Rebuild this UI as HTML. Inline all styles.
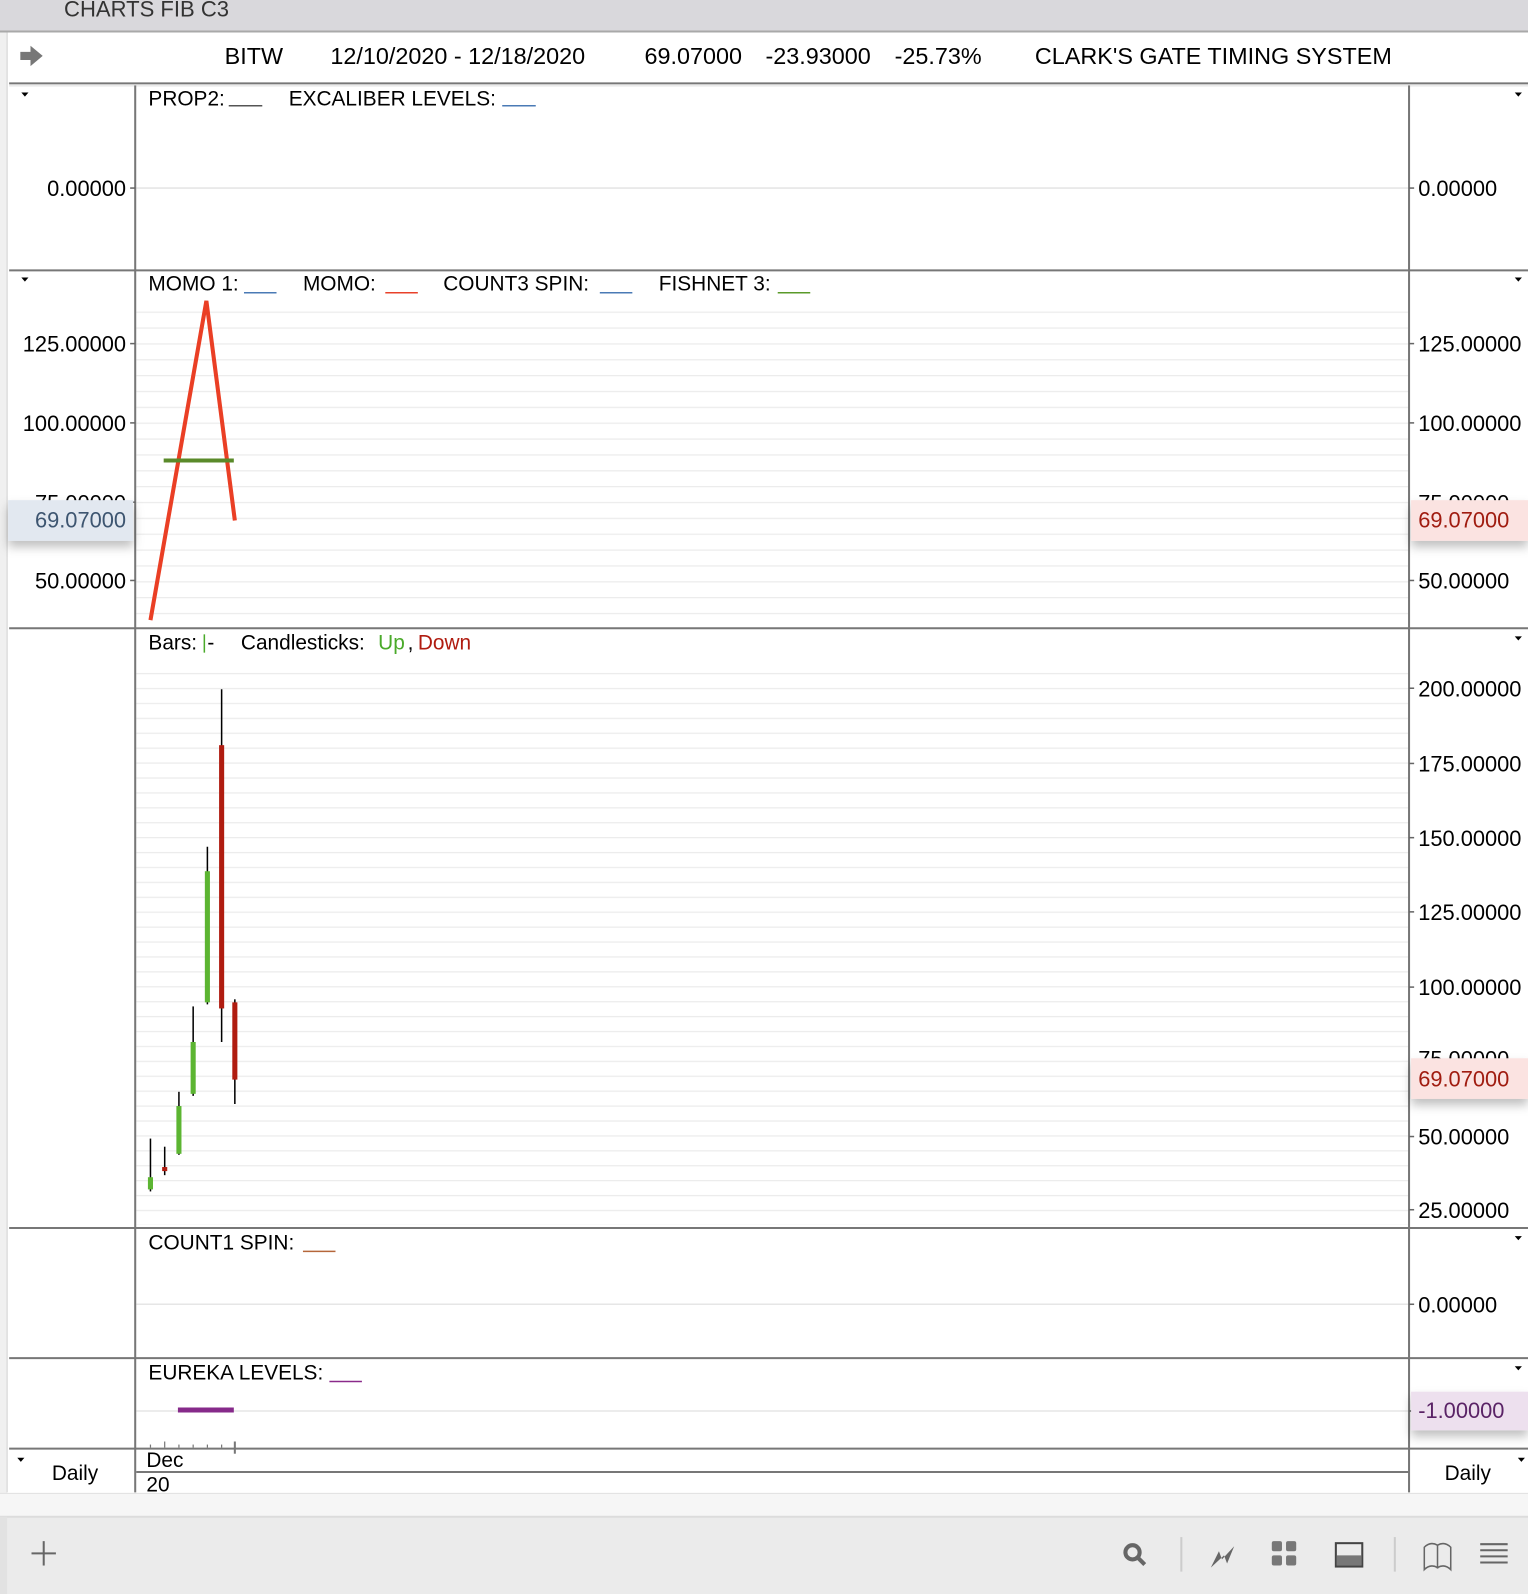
<!DOCTYPE html>
<html><head><meta charset="utf-8"><style>
html,body{margin:0;padding:0;background:#fff;overflow:hidden}
#w{width:1503px;height:1568px;transform:scale(1.01663,1.01658);transform-origin:0 0}
text{font-family:"Liberation Sans",Arial,sans-serif}
</style></head><body><div id="w">
<svg width="1503" height="1568" viewBox="0 0 1503 1568" xmlns="http://www.w3.org/2000/svg">
<defs>
<pattern id="g2" x="0" y="306.5" width="10" height="15.6" patternUnits="userSpaceOnUse"><line x1="0" y1="0.5" x2="10" y2="0.5" stroke="#ececec" stroke-width="1.5"/></pattern>
<pattern id="g3" x="0" y="662" width="10" height="14.67" patternUnits="userSpaceOnUse"><line x1="0" y1="0.5" x2="10" y2="0.5" stroke="#ececec" stroke-width="1.5"/></pattern>
<filter id="sh" x="-10%" y="-40%" width="120%" height="200%"><feDropShadow dx="0" dy="6" stdDeviation="5" flood-color="#000" flood-opacity="0.25"/></filter>
</defs>
<rect width="1503" height="1568" fill="#fff"/>
<rect x="0" y="0" width="1503" height="31" fill="#d9d8dc"/>
<line x1="0" y1="31" x2="1503" y2="31" stroke="#a9a9a9" stroke-width="2"/>
<text x="63" y="16" font-size="21.7" fill="#333">CHARTS FIB C3</text>
<rect x="0" y="32" width="7" height="1460" fill="#f0f0f0"/>
<line x1="7" y1="32" x2="7" y2="1468" stroke="#d0d0d0"/>
<path d="M20 51 h10 v-6 l12 10 l-12 10 v-6 h-10z" fill="#777"/>
<g font-size="23" fill="#000">
<text x="221" y="63">BITW</text>
<text x="325" y="63">12/10/2020 - 12/18/2020</text>
<text x="634" y="63">69.07000</text>
<text x="753" y="63">-23.93000</text>
<text x="880" y="63">-25.73%</text>
<text x="1018" y="63">CLARK'S GATE TIMING SYSTEM</text>
</g>
<line x1="9" y1="82" x2="1503" y2="82" stroke="#777" stroke-width="2"/>
<line x1="9" y1="84.5" x2="1503" y2="84.5" stroke="#ddd" stroke-width="1"/>
<line x1="134" y1="185" x2="1386" y2="185" stroke="#e6e6e6" stroke-width="1.5"/>
<rect x="134" y="300" width="1252" height="316" fill="url(#g2)"/>
<rect x="134" y="655" width="1252" height="550" fill="url(#g3)"/>
<line x1="134" y1="1283" x2="1386" y2="1283" stroke="#e6e6e6" stroke-width="1.5"/>
<line x1="134" y1="1388" x2="1386" y2="1388" stroke="#e6e6e6" stroke-width="1.5"/>
<g stroke="#777" stroke-width="2">
<line x1="9" y1="266" x2="1503" y2="266"/>
<line x1="9" y1="618" x2="1503" y2="618"/>
<line x1="9" y1="1208" x2="1503" y2="1208"/>
<line x1="9" y1="1336" x2="1503" y2="1336"/>
<line x1="9" y1="1425" x2="1503" y2="1425"/>
<line x1="134" y1="1448" x2="1386" y2="1448"/>
<line x1="133" y1="84" x2="133" y2="1468"/>
<line x1="1386" y1="84" x2="1386" y2="1468"/>
</g>
<g stroke="#666" stroke-width="1.5">
<line x1="128" y1="185" x2="133" y2="185"/><line x1="1386" y1="185" x2="1391" y2="185"/>
<line x1="128" y1="338" x2="133" y2="338"/><line x1="128" y1="416" x2="133" y2="416"/><line x1="128" y1="494" x2="133" y2="494"/><line x1="128" y1="571" x2="133" y2="571"/>
<line x1="1386" y1="338" x2="1391" y2="338"/><line x1="1386" y1="416" x2="1391" y2="416"/><line x1="1386" y1="571" x2="1391" y2="571"/>
<line x1="1386" y1="677" x2="1391" y2="677"/><line x1="1386" y1="751" x2="1391" y2="751"/><line x1="1386" y1="824" x2="1391" y2="824"/><line x1="1386" y1="897" x2="1391" y2="897"/><line x1="1386" y1="971" x2="1391" y2="971"/><line x1="1386" y1="1118" x2="1391" y2="1118"/><line x1="1386" y1="1190" x2="1391" y2="1190"/>
<line x1="1386" y1="1283" x2="1391" y2="1283"/><line x1="1386" y1="1388" x2="1391" y2="1388"/>
</g>
<g fill="#000">
<path d="M21 91h7l-3.5 4z"/><path d="M1490 91h7l-3.5 4z"/>
<path d="M21 273h7l-3.5 4z"/><path d="M1490 273h7l-3.5 4z"/>
<path d="M1490 626h7l-3.5 4z"/><path d="M1490 1216h7l-3.5 4z"/><path d="M1490 1344h7l-3.5 4z"/>
<path d="M17 1434h7l-3.5 4z"/><path d="M1493 1434h7l-3.5 4z"/>
</g>
<g font-size="21.5" fill="#000">
<text x="124" y="193" text-anchor="end">0.00000</text>
<text x="1395" y="193">0.00000</text>
<text x="124" y="346" text-anchor="end">125.00000</text>
<text x="124" y="424" text-anchor="end">100.00000</text>
<text x="124" y="502" text-anchor="end">75.00000</text>
<text x="124" y="579" text-anchor="end">50.00000</text>
<text x="1395" y="346">125.00000</text>
<text x="1395" y="424">100.00000</text>
<text x="1395" y="502">75.00000</text>
<text x="1395" y="579">50.00000</text>
<text x="1395" y="685">200.00000</text>
<text x="1395" y="759">175.00000</text>
<text x="1395" y="832">150.00000</text>
<text x="1395" y="905">125.00000</text>
<text x="1395" y="979">100.00000</text>
<text x="1395" y="1049">75.00000</text>
<text x="1395" y="1126">50.00000</text>
<text x="1395" y="1198">25.00000</text>
<text x="1395" y="1291">0.00000</text>
</g>
<rect x="8" y="492" width="123" height="40" fill="#e2e8f0" filter="url(#sh)"/>
<text x="124" y="519" font-size="21.5" fill="#3d5570" text-anchor="end">69.07000</text>
<rect x="1388" y="492" width="115" height="40" fill="#fbe3e1" filter="url(#sh)"/>
<text x="1395" y="519" font-size="21.5" fill="#a01c10">69.07000</text>
<rect x="1388" y="1041" width="115" height="40" fill="#fbe3e1" filter="url(#sh)"/>
<text x="1395" y="1069" font-size="21.5" fill="#a01c10">69.07000</text>
<rect x="1388" y="1369" width="115" height="38" fill="#ede0ee" filter="url(#sh)"/>
<text x="1395" y="1395" font-size="21.5" fill="#5a2366">-1.00000</text>
<g font-size="20.5" fill="#000">
<text x="146" y="104">PROP2:</text><line x1="225" y1="104" x2="258" y2="104" stroke="#555" stroke-width="1.5"/>
<text x="284" y="104">EXCALIBER LEVELS:</text><line x1="494" y1="104" x2="527" y2="104" stroke="#4a7ab5" stroke-width="1.5"/>
<text x="146" y="286">MOMO 1:</text><line x1="240" y1="288" x2="272" y2="288" stroke="#4a7ab5" stroke-width="1.5"/>
<text x="298" y="286">MOMO:</text><line x1="379" y1="288" x2="411" y2="288" stroke="#e8412a" stroke-width="1.5"/>
<text x="436" y="286">COUNT3 SPIN:</text><line x1="590" y1="288" x2="622" y2="288" stroke="#4a7ab5" stroke-width="1.5"/>
<text x="648" y="286">FISHNET 3:</text><line x1="765" y1="288" x2="797" y2="288" stroke="#5a9a2a" stroke-width="1.5"/>
<text x="146" y="639">Bars:</text><line x1="201" y1="624" x2="201" y2="642" stroke="#4aaa2a" stroke-width="1.5"/><text x="204" y="639">-</text>
<text x="237" y="639">Candlesticks:</text><text x="372" y="639" fill="#4aaa2a">Up</text><text x="401" y="639">,</text><text x="411" y="639" fill="#b01c10">Down</text>
<text x="146" y="1229">COUNT1 SPIN:</text><line x1="298" y1="1231" x2="330" y2="1231" stroke="#b5663a" stroke-width="1.5"/>
<text x="146" y="1357">EUREKA LEVELS:</text><line x1="324" y1="1359" x2="356" y2="1359" stroke="#8a2a8a" stroke-width="1.5"/>
<text x="51" y="1456">Daily</text>
<text x="1421" y="1456">Daily</text>
<text x="144" y="1443">Dec</text>
<text x="144" y="1467">20</text>
</g>
<polyline points="148,610 203,296 231,512" fill="none" stroke="#ea3f25" stroke-width="4"/>
<line x1="161" y1="453" x2="230" y2="453" stroke="#5a8a2a" stroke-width="4"/>
<g stroke="#000" stroke-width="1.5">
<line x1="148" y1="1120" x2="148" y2="1172"/>
<line x1="162" y1="1128" x2="162" y2="1156"/>
<line x1="176" y1="1074" x2="176" y2="1136"/>
<line x1="190" y1="990" x2="190" y2="1078"/>
<line x1="204" y1="833" x2="204" y2="988"/>
<line x1="218" y1="678" x2="218" y2="1025"/>
<line x1="231" y1="983" x2="231" y2="1086"/>
</g>
<g>
<rect x="145.5" y="1158" width="5" height="12" fill="#5cb532"/>
<rect x="159.5" y="1148" width="5" height="4" fill="#b01c10"/>
<rect x="173.5" y="1088" width="5" height="47" fill="#5cb532"/>
<rect x="187.5" y="1025" width="5" height="51" fill="#5cb532"/>
<rect x="201.5" y="857" width="5" height="129" fill="#5cb532"/>
<rect x="215.5" y="733" width="5" height="259" fill="#b01c10"/>
<rect x="228.5" y="986" width="5" height="76" fill="#b01c10"/>
</g>
<line x1="175" y1="1387" x2="230" y2="1387" stroke="#862a8a" stroke-width="5"/>
<g stroke="#777" stroke-width="1.2">
<line x1="148" y1="1421" x2="148" y2="1424"/><line x1="162" y1="1418" x2="162" y2="1424"/><line x1="176" y1="1421" x2="176" y2="1424"/><line x1="190" y1="1421" x2="190" y2="1424"/><line x1="204" y1="1421" x2="204" y2="1424"/><line x1="218" y1="1421" x2="218" y2="1424"/><line x1="231" y1="1418" x2="231" y2="1430" stroke-width="2"/>
</g>
<rect x="0" y="1469" width="1503" height="23" fill="#f6f6f6"/>
<line x1="0" y1="1469" x2="1503" y2="1469" stroke="#e0e0e0"/>
<rect x="0" y="1492" width="1503" height="76" fill="#ebebeb"/>
<line x1="0" y1="1492" x2="1503" y2="1492" stroke="#dcdcdc" stroke-width="2"/>
<rect x="0" y="1492" width="7" height="76" fill="#e2e2e2"/>
<g stroke="#666" stroke-width="2" fill="none">
<line x1="43" y1="1516" x2="43" y2="1540"/><line x1="31" y1="1528" x2="55" y2="1528"/>
<circle cx="1114" cy="1527" r="7" stroke-width="4"/><line x1="1119" y1="1532" x2="1126" y2="1539" stroke-width="4"/>
<line x1="1162" y1="1512" x2="1162" y2="1546" stroke="#ccc"/>
<line x1="1372" y1="1512" x2="1372" y2="1546" stroke="#ccc"/>
<rect x="1314" y="1518" width="26" height="23" stroke="#444"/>
<path d="M1401 1522 q6 -6 13 -2 v22 q-7 -4 -13 2z M1414 1520 q7 -4 13 2 v22 q-6 -6 -13 -2z" stroke-width="1.5"/>
<g stroke-width="2"><line x1="1456" y1="1519" x2="1483" y2="1519"/><line x1="1456" y1="1525" x2="1483" y2="1525"/><line x1="1456" y1="1531" x2="1483" y2="1531"/><line x1="1456" y1="1537" x2="1483" y2="1537"/></g>
</g>
<rect x="1315" y="1530" width="24" height="10" fill="#777"/>
<path d="M1191 1542 l8 -16 l3 8 l12 -13 l-7 17 l-3 -8z" fill="#666"/>
<g fill="#777"><rect x="1251" y="1516" width="10" height="10" rx="2"/><rect x="1265" y="1516" width="10" height="10" rx="2"/><rect x="1251" y="1530" width="10" height="10" rx="2"/><rect x="1265" y="1530" width="10" height="10" rx="2"/></g>
</svg>
</div></body></html>
